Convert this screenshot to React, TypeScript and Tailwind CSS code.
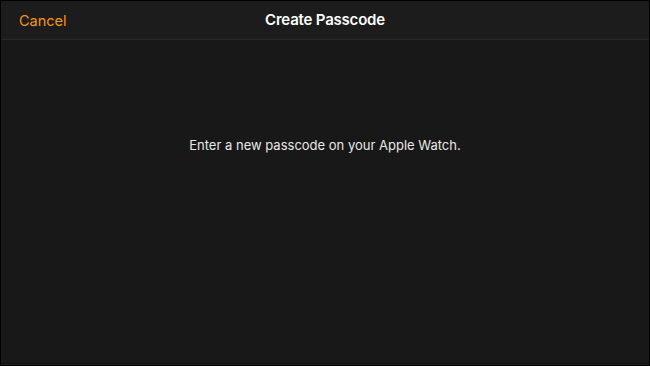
export default function App() {
  return (
    <div className="w-[650px] h-[366px] border border-black bg-[#181818] flex flex-col font-['Inter',sans-serif]">
      <header className="h-[39px] shrink-0 bg-[#1c1c1c] border-b border-[#2a2a2a] relative flex items-center justify-center">
        <button className="absolute left-[18px] top-[10px] text-[14.5px] leading-[20px] text-[#f5950f]">Cancel</button>
        <h1 className="text-[15px] font-semibold tracking-[-0.2px] text-white">Create Passcode</h1>
      </header>
      <main className="flex-1 flex justify-center pt-[96px]">
        <p className="text-[13px] leading-[18px] text-[#e8e8e8]">Enter a new passcode on your Apple Watch.</p>
      </main>
    </div>
  );
}
